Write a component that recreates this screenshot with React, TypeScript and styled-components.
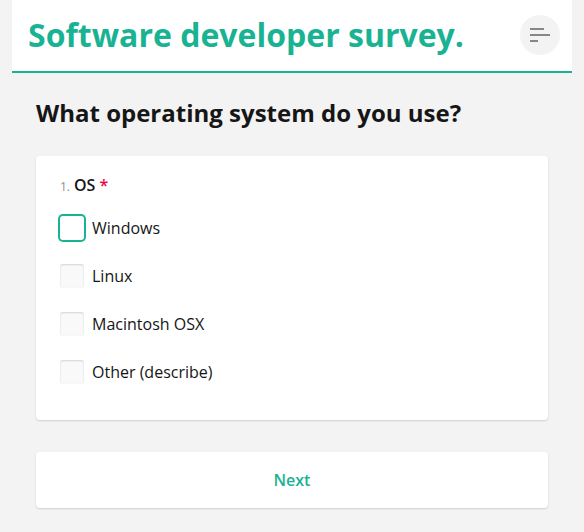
import React from "react";
import styled, { createGlobalStyle } from "styled-components";

const GlobalStyle = createGlobalStyle`
  html, body { margin: 0; padding: 0; background: #f3f3f3; }
  body { font-family: "Open Sans", "Noto Sans", sans-serif; }
  * { box-sizing: border-box; }
`;

const Page = styled.div`
  padding: 0 12px;
  min-height: 532px;
  background: #f3f3f3;
`;

const Header = styled.header`
  display: flex;
  align-items: center;
  justify-content: space-between;
  height: 73px;
  padding: 0 12px 2px 16px;
  background: #fff;
  border-bottom: 2px solid #19b394;
`;

const Title = styled.h1`
  margin: 0;
  font-size: 32px;
  line-height: 40px;
  font-weight: 700;
  color: #19b394;
`;

const MenuButton = styled.button`
  width: 40px;
  height: 40px;
  border: none;
  border-radius: 50%;
  background: #f3f3f3;
  display: flex;
  flex-direction: column;
  justify-content: center;
  align-items: flex-start;
  gap: 4px;
  padding: 0 0 0 10px;
`;

const MenuLine = styled.span<{ $w: number }>`
  display: block;
  width: ${(p) => p.$w}px;
  height: 2px;
  background: #888;
`;

const Content = styled.main`
  padding: 0 24px;
`;

const PageTitle = styled.h2`
  margin: 0;
  padding: 24px 0 0;
  font-size: 24px;
  line-height: 32px;
  font-weight: 700;
  color: #161616;
`;

const Card = styled.section`
  margin-top: 27px;
  background: #fff;
  border-radius: 4px;
  box-shadow: 0 1px 2px rgba(0, 0, 0, 0.15);
  padding: 17px 24px 24px;
  height: 264px;
`;

const QTitle = styled.div`
  display: flex;
  align-items: baseline;
  gap: 4px;
  font-size: 16px;
  line-height: 24px;
  font-weight: 600;
  color: #161616;
`;

const QNum = styled.span`
  font-size: 12px;
  font-weight: 400;
  color: #909090;
`;

const Req = styled.span`
  color: #e60a3e;
  margin-left: 4px;
`;

const Options = styled.div`
  display: flex;
  flex-direction: column;
  margin-top: 5px;
`;

const Option = styled.label`
  display: flex;
  align-items: center;
  gap: 8px;
  height: 48px;
  font-size: 16px;
  color: #161616;
`;

const Box = styled.span<{ $focused?: boolean }>`
  width: 24px;
  height: 24px;
  border-radius: 3px;
  background: ${(p) => (p.$focused ? "#fff" : "#f9f9f9")};
  box-shadow: ${(p) =>
    p.$focused
      ? "0 0 0 2px #19b394"
      : "inset 0 1px 2px rgba(0, 0, 0, 0.15)"};
  flex: none;
`;

const NextButton = styled.button`
  display: block;
  width: 100%;
  margin-top: 32px;
  height: 56px;
  border: none;
  border-radius: 4px;
  background: #fff;
  box-shadow: 0 1px 2px rgba(0, 0, 0, 0.15);
  font-family: "Open Sans", "Noto Sans", sans-serif;
  font-size: 16px;
  font-weight: 600;
  color: #19b394;
`;

const options = ["Windows", "Linux", "Macintosh OSX", "Other (describe)"];

export default function App() {
  return (
    <>
      <GlobalStyle />
      <Page>
        <Header>
          <Title>Software developer survey.</Title>
          <MenuButton aria-label="menu">
            <MenuLine $w={14} />
            <MenuLine $w={20} />
            <MenuLine $w={8} />
          </MenuButton>
        </Header>
        <Content>
          <PageTitle>What operating system do you use?</PageTitle>
          <Card>
            <QTitle>
              <QNum>1.</QNum>
              <span>
                OS<Req>*</Req>
              </span>
            </QTitle>
            <Options>
              {options.map((o, i) => (
                <Option key={o}>
                  <Box $focused={i === 0} />
                  {o}
                </Option>
              ))}
            </Options>
          </Card>
          <NextButton>Next</NextButton>
        </Content>
      </Page>
    </>
  );
}
